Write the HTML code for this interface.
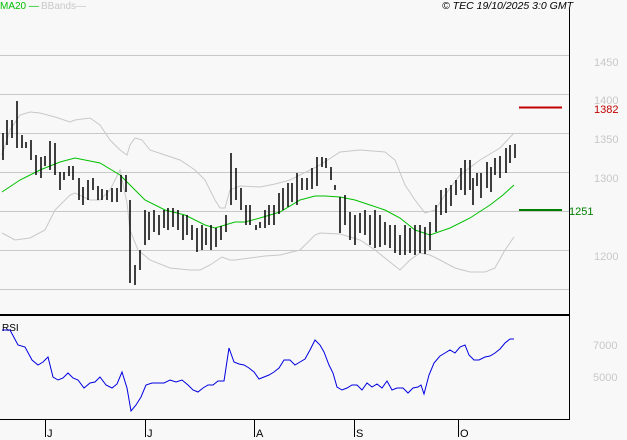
<!DOCTYPE html>
<html><head><style>
body{margin:0;background:#f8f8f8;}
svg{display:block;font-family:"Liberation Sans",sans-serif;}
</style></head><body>
<svg width="627" height="440" viewBox="0 0 627 440">
<rect width="627" height="440" fill="#f8f8f8"/>
<g stroke="#c8c8c8" stroke-width="1">
<line x1="0" y1="55.5" x2="569" y2="55.5"/>
<line x1="0" y1="94.5" x2="569" y2="94.5"/>
<line x1="0" y1="133.5" x2="569" y2="133.5"/>
<line x1="0" y1="172.5" x2="569" y2="172.5"/>
<line x1="0" y1="211.5" x2="569" y2="211.5"/>
<line x1="0" y1="250.5" x2="569" y2="250.5"/>
<line x1="0" y1="289.5" x2="569" y2="289.5"/>
</g>
<line x1="569.5" y1="9" x2="569.5" y2="420" stroke="#000"/>
<line x1="0" y1="315" x2="569" y2="315" stroke="#000" stroke-width="2"/>
<line x1="0" y1="419.5" x2="570" y2="419.5" stroke="#000"/>
<g stroke="#000"><line x1="45.5" y1="419" x2="45.5" y2="437"/><line x1="145.5" y1="419" x2="145.5" y2="437"/><line x1="254.5" y1="419" x2="254.5" y2="437"/><line x1="354.5" y1="419" x2="354.5" y2="437"/><line x1="458.5" y1="419" x2="458.5" y2="437"/></g>
<g font-size="11" fill="#000"><text x="47" y="437">J</text><text x="147" y="437">J</text><text x="256" y="437">A</text><text x="356" y="437">S</text><text x="460" y="437">O</text></g>
<text x="0" y="9" font-size="10" fill="#00c000">MA20 —</text>
<text x="41" y="9" font-size="10" fill="#c8c8c8">BBands—</text>
<text x="442" y="9" font-size="10.5" font-style="italic" fill="#000" textLength="131" lengthAdjust="spacingAndGlyphs">© TEC 19/10/2025 3:0 GMT</text>
<g font-size="11" fill="#c8c8c8"><text x="594" y="66">1450</text><text x="594" y="104">1400</text><text x="594" y="143">1350</text><text x="594" y="182">1300</text><text x="594" y="260">1200</text>
<text x="593" y="349">7000</text><text x="593" y="381">5000</text></g>
<text x="594" y="113" font-size="11" fill="#c00000">1382</text>
<line x1="519" y1="107.5" x2="562" y2="107.5" stroke="#c00000" stroke-width="2"/>
<text x="569" y="215" font-size="11" fill="#008000">1251</text>
<line x1="519" y1="210" x2="562" y2="210" stroke="#008000" stroke-width="2"/>
<text x="2" y="331" font-size="10" fill="#000">RSI</text>
<g fill="none" stroke="#c8c8c8">
<polyline points="2,155 10,130 20,115 30,112 40,113 55,117 70,122 75,120 90,118 100,125 110,140 120,150 127,155 130,145 135,138 142,140 150,150 165,155 180,160 195,170 205,180 215,200 220,208 225,208 230,190 240,186 260,187 275,184 290,180 300,175 320,165 340,152 360,150 385,152 395,160 405,185 415,200 425,213 435,210 445,195 460,175 480,160 500,148 514,133"/>
<polyline points="2,233 15,240 30,238 45,230 55,210 70,195 75,193 90,200 100,200 110,190 120,170 127,203 130,230 138,250 150,260 170,268 190,270 200,270 210,265 222,257 230,260 235,260 250,258 265,256 280,255 300,250 315,235 320,233 340,234 360,240 375,250 390,262 400,270 410,260 420,253 430,255 440,260 455,268 470,272 485,272 495,268 505,250 514,237"/>
</g>
<polyline fill="none" stroke="#00c000" points="2,192 20,180 40,170 60,162 75,158 100,163 120,175 130,185 145,200 165,210 185,215 205,225 215,228 225,225 235,222 245,222 260,218 280,212 300,200 315,196 325,196 340,197 355,200 370,205 385,210 400,218 415,230 430,235 450,228 470,218 490,205 503,195 514,185"/>
<g stroke="#000" stroke-width="1.5">
<path d="M3 133V160M7 120V145M12 120V138M17 101V148M22 135V148M26 142V148M31 140V160M36 155V175M41 157V178M45 156V166M50 141V170M55 143V175M60 172V190M64 172V180M69 166V176M73 166V180M79 178V200M83 187V205M88 180V200M93 178V190M98 186V200M102 189V200M107 190V200M112 188V202M117 188V202M121 175V192M126 175V192M130 200V283M135 265V285M140 250V270M145 210V245M149 212V240M154 210V232M159 215V235M164 210V228M168 208V230M173 208V227M178 210V230M183 215V240M187 215V235M192 225V240M197 228V252M202 225V250M206 228V245M211 225V250M216 228V247M221 226V240M226 215V232M231 153V205M236 168V200M241 188V210M246 205V225M250 205V225M256 225V230M260 222V228M265 210V228M269 205V225M274 205V225M279 193V214M283 188V210M288 183V207M292 183V202M297 173V205M302 178V190M307 178V190M312 168V189M317 157V186M322 157V167M326 158V168M331 167V180M335 185V190M340 197V233M345 195V225M350 212V240M355 215V245M360 213V233M365 210V235M370 215V245M375 210V248M380 215V247M385 222V245M390 225V248M395 225V253M400 235V255M405 225V255M410 228V253M415 225V255M420 225V253M425 227V254M430 222V250M436 205V232M441 190V215M446 188V213M451 185V206M456 180V195M461 168V190M465 160V195M470 160V190M473 178V205M477 173V186M481 173V198M487 162V188M491 167V192M495 158V175M500 156V178M506 148V173M510 145V163M515 144V158"/>
</g>
<polyline fill="none" stroke="#0000e0" points="2,330 10,330 18,345 25,347 32,360 38,365 43,362 48,357 53,377 58,380 63,378 68,373 73,378 78,380 84,388 90,383 95,382 100,377 106,385 112,388 117,384 122,372 127,388 131,411 136,405 141,397 146,385 152,383 158,383 164,383 170,380 176,382 182,380 188,385 193,390 198,392 203,388 208,385 213,385 218,381 224,381 229,348 234,362 239,364 244,365 249,368 254,372 259,379 264,377 269,375 274,372 279,368 284,360 290,360 295,365 300,362 305,359 310,350 315,340 320,345 324,352 329,365 333,373 337,387 342,390 347,388 352,385 357,385 362,390 367,383 372,387 377,384 382,388 387,381 392,390 397,388 403,388 408,393 413,388 418,387 421,385 424,394 429,375 434,363 440,356 445,353 450,350 455,353 460,347 465,345 469,355 474,360 479,360 485,357 490,356 495,353 500,349 505,343 510,339 514,339"/>
</svg>
</body></html>
